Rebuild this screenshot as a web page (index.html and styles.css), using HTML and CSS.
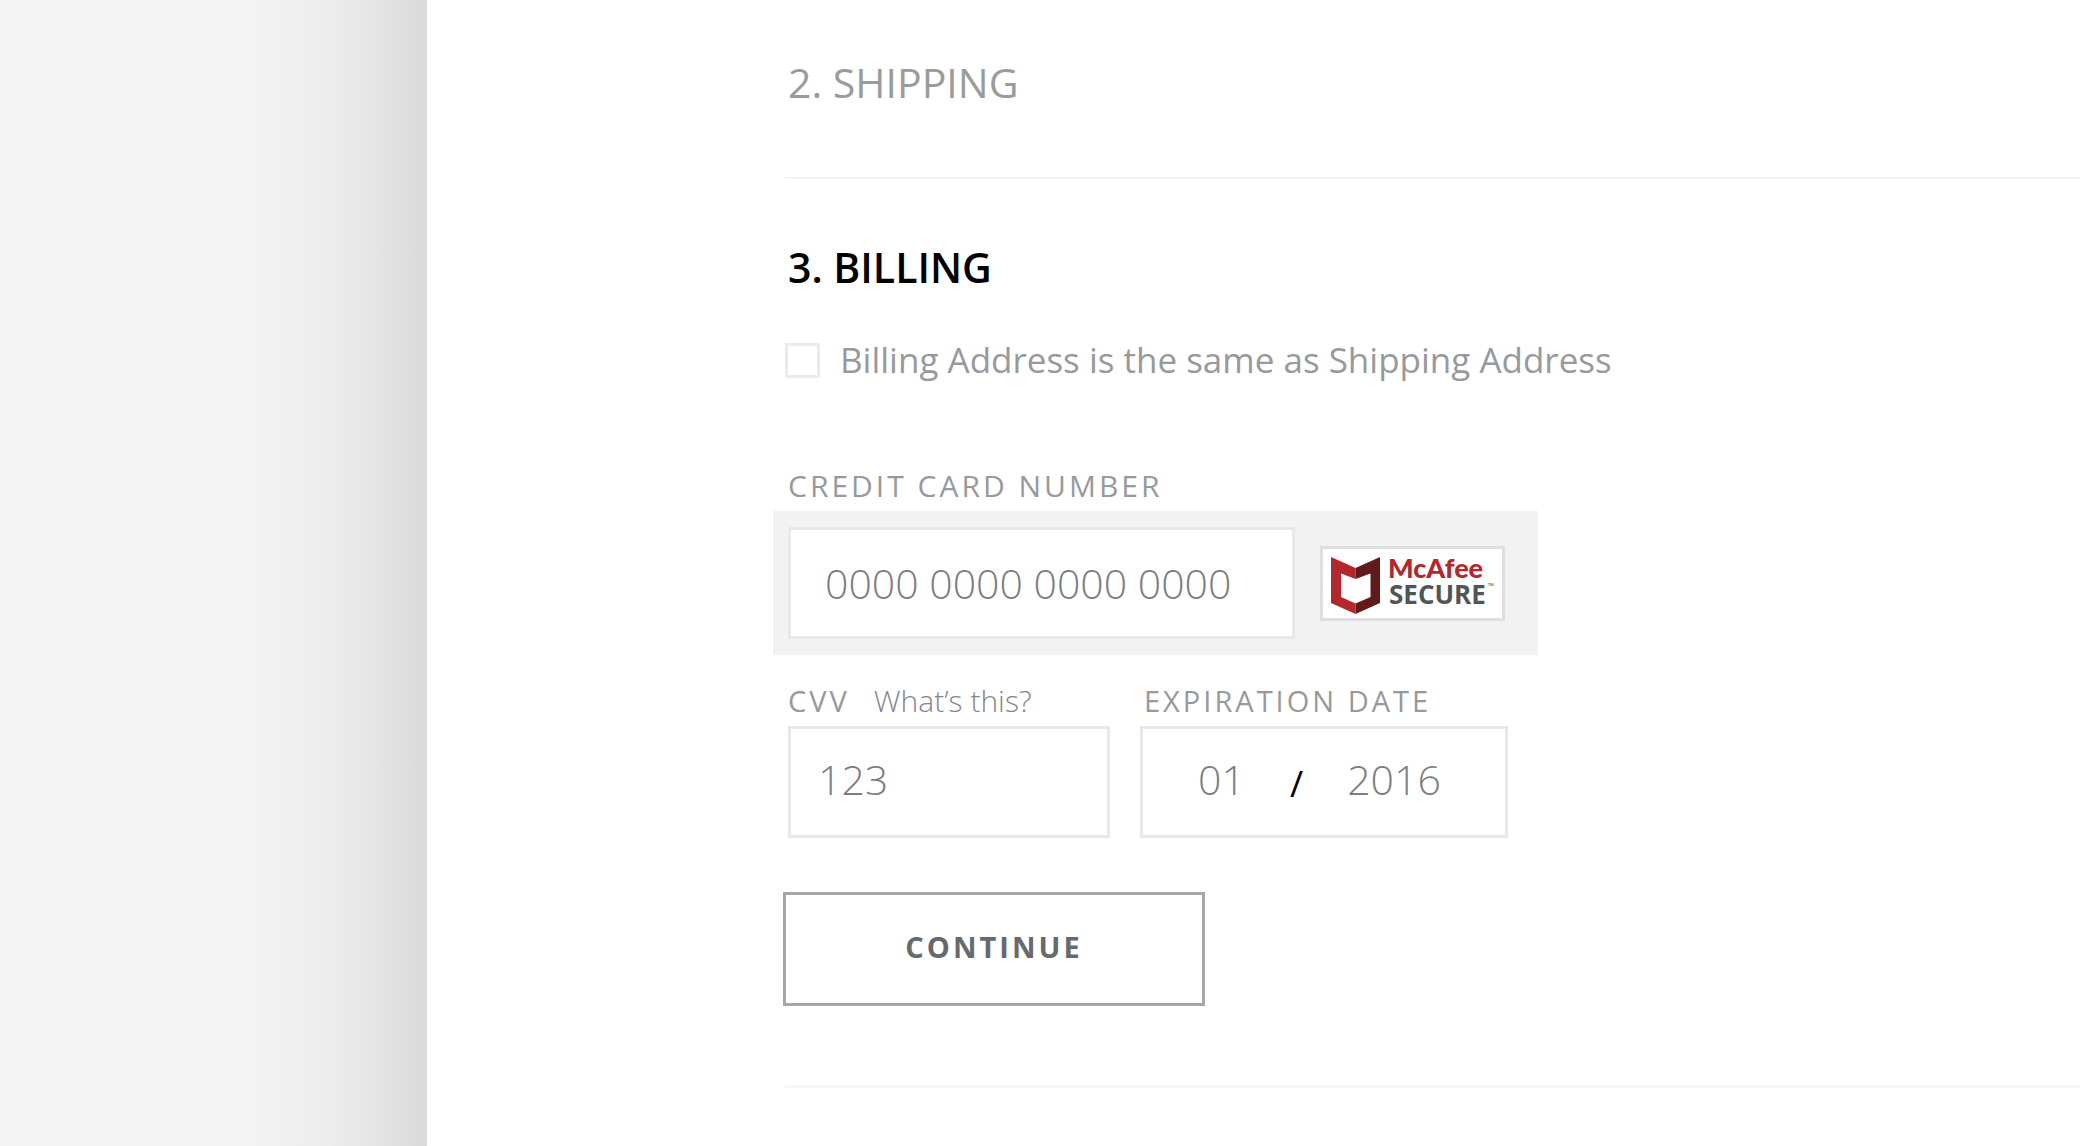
FILE: index.html
```html
<!DOCTYPE html>
<html lang="en">
<head>
<meta charset="utf-8">
<meta name="viewport" content="width=device-width, initial-scale=1">
<title>Checkout</title>
<link rel="stylesheet" href="styles.css">
</head>
<body>
<div class="page">
  <aside class="gutter"></aside>
  <main class="checkout">
    <section class="step step-closed">
      <h2 class="step-title">2. SHIPPING</h2>
    </section>
    <section class="step step-open">
      <h2 class="step-title">3. BILLING</h2>
      <form class="billing">
        <div class="same-address">
          <input class="tick" type="checkbox" id="same">
          <label for="same">Billing Address is the same as Shipping Address</label>
        </div>
        <div class="label-row">
          <label class="caption" for="card">CREDIT CARD NUMBER</label>
        </div>
        <div class="card-panel">
          <input class="box card-number" type="text" id="card" placeholder="0000 0000 0000 0000">
          <div class="badge">
            <svg class="badge-art" viewBox="0 0 179 69" role="img" aria-label="McAfee SECURE">
              <path fill="#b3272d" d="M8 8 32.500 19V30L18 24.500V48L32.500 54.500V65L8 54Z"/>
              <path fill="#611a1c" d="M57 8 32.500 19V30L47.500 24.500V48L32.500 54.500V65L57 54Z"/>
              <text class="mcafee" x="65" y="29">McAfee</text>
              <text class="secure" x="66" y="55">SECURE</text>
              <text class="tm" x="165" y="40">™</text>
            </svg>
          </div>
        </div>
        <div class="field-row">
          <div class="field cvv-field">
            <div class="label-row">
              <label class="caption" for="cvv">CVV</label>
              <a class="help" href="#cvv-help">What’s this?</a>
            </div>
            <input class="box cvv" type="text" id="cvv" placeholder="123">
          </div>
          <div class="field expiry-field">
            <div class="label-row">
              <label class="caption" for="month">EXPIRATION DATE</label>
            </div>
            <div class="box expiry">
              <input class="part month" type="text" id="month" placeholder="01">
              <span class="slash">/</span>
              <input class="part year" type="text" aria-label="Expiration year" placeholder="2016">
            </div>
          </div>
        </div>
        <button class="continue" type="button">CONTINUE</button>
      </form>
    </section>
  </main>
</div>
</body>
</html>
```
FILE: styles.css
```css
* { box-sizing: border-box; }

body {
  margin: 0;
  background: #fff;
  color: #97999c;
  font-family: "Open Sans", "Noto Sans", sans-serif;
}

.page {
  display: flex;
  min-height: 100vh;
}

.gutter {
  flex: 0 0 427px;
  background: linear-gradient(to right, #f3f3f3 250px, #ededed 325px, #e4e4e4 380px, #d9d9d9 427px);
}

.checkout {
  flex: 1;
  min-width: 0;
  padding-left: 358px;
}

.step-title {
  margin: 0;
  padding-left: 3px;
  font-size: 41px;
  line-height: 48px;
  font-weight: 400;
}

.step-closed {
  padding: 58px 0 71px;
  border-bottom: 2px solid #f3f3f3;
  color: #9b9b9b;
}

.step-open {
  padding: 64px 0 79px;
  border-bottom: 3px solid #f6f6f6;
}

.step-open .step-title {
  color: #000;
  font-weight: 600;
}

.same-address {
  display: flex;
  align-items: center;
  gap: 20px;
  margin-top: 45px;
  font-size: 35px;
  line-height: 48px;
}

.tick {
  appearance: none;
  width: 35px;
  height: 35px;
  margin: 0;
  border: 3px solid #ebebeb;
  background: #fff;
}

.label-row {
  display: flex;
  align-items: baseline;
  gap: 24px;
  padding-left: 3px;
  font-size: 30px;
  line-height: 40px;
}

.same-address + .label-row { margin-top: 82px; }

.caption { letter-spacing: 3px; }
.field .caption { font-size: 29px; }

.help {
  color: #85878a;
  font-weight: 300;
  text-decoration: none;
}

.card-panel {
  display: flex;
  align-items: center;
  gap: 25px;
  width: 765px;
  max-width: 100%;
  margin: 5px 0 0 -12px;
  padding: 16px 15px;
  background: #f2f2f2;
}

.box {
  height: 112px;
  border: 3px solid #e8e8e8;
  border-radius: 0;
  background: #fff;
}

.box,
.part {
  color: #7b7e81;
  font-family: inherit;
  font-size: 41px;
  font-weight: 300;
}

::placeholder {
  color: #7b7e81;
  opacity: 1;
}

.card-number {
  width: 507px;
  padding: 0 34px;
}

.badge {
  width: 185px;
  border: 3px solid #dedede;
  background: #fff;
}

.badge-art { display: block; }

.mcafee {
  fill: #b3272d;
  font: 900 27px Lato, sans-serif;
}

.secure {
  fill: #505556;
  font: 700 26px "Open Sans", sans-serif;
}

.tm {
  fill: #505556;
  font: 400 8px "Open Sans", sans-serif;
}

.field-row {
  display: flex;
  gap: 30px;
  margin: 26px 0 0 3px;
}

.field .label-row { padding-left: 0; }
.expiry-field .label-row { padding-left: 4px; }

.field .box {
  width: 100%;
  margin-top: 5px;
  padding: 0 27px 6px;
}

.cvv-field { width: 322px; }
.expiry-field { width: 368px; }

.field .expiry {
  display: flex;
  align-items: center;
  gap: 44px;
  padding: 0 0 6px 55px;
}

.part {
  padding: 0;
  border: 0;
  background: none;
}

.month { width: 48px; }
.year { width: 100px; }

.slash {
  color: #000;
  font-size: 36px;
  font-weight: 500;
  line-height: 48px;
  padding-top: 10px;
}

.continue {
  display: block;
  width: 422px;
  height: 114px;
  margin: 54px 0 0 -2px;
  padding: 0 0 6px;
  border: 3px solid #a5a6a9;
  background: #fff;
  color: #66696d;
  font: 700 29px "Open Sans", sans-serif;
  letter-spacing: 3px;
}
```
